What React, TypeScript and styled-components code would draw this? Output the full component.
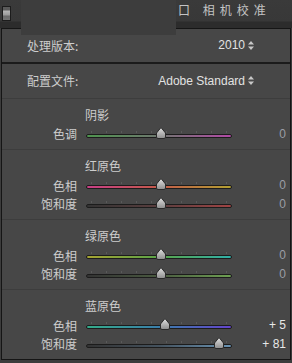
import React from 'react';
import styled, { createGlobalStyle } from 'styled-components';

const GlobalStyle = createGlobalStyle`
  html, body {
    margin: 0;
    padding: 0;
    background: #3c3c3c;
  }
  body {
    width: 292px;
    height: 363px;
    overflow: hidden;
    font-family: "Noto Sans CJK SC", "Liberation Sans", sans-serif;
  }
`;

const Page = styled.div`
  position: relative;
  width: 292px;
  height: 363px;
  display: flex;
  flex-direction: column;
`;

const TitleBar = styled.div`
  height: 28px;
  box-sizing: border-box;
  display: flex;
  align-items: flex-start;
  background: linear-gradient(#3a3a3a 0, #383838 21px, #2c2c2c 22px, #2c2c2c 28px);
  overflow: hidden;
`;

const GripIcon = styled.div`
  margin: 6px 0 0 2px;
  width: 9px;
  height: 15px;
  box-sizing: border-box;
  border: 1px solid #1c1c1c;
  background: linear-gradient(#5a5a5a 0, #5a5a5a 3px, #b4b4b4 4px, #9a9a9a 8px, #6a6a6a 9px, #747474 100%);
`;

const TitleText = styled.div`
  margin: 3px 0 0 167px;
  font-size: 12px;
  line-height: 14px;
  letter-spacing: 5px;
  color: #c4c4c4;
  white-space: nowrap;
`;

const Redaction = styled.div`
  position: absolute;
  left: 21px;
  top: 0;
  width: 155px;
  height: 35px;
  background: #3d3d3d;
`;

const Panel = styled.div`
  margin: 0 1px;
  border: 1px solid #151515;
  background: #474747;
  display: flex;
  flex-direction: column;
  height: 332px;
  box-sizing: border-box;
`;

const TopRow = styled.div<{ $h: number; $strong?: boolean }>`
  height: ${p => p.$h}px;
  display: flex;
  align-items: center;
  justify-content: space-between;
  padding: 0 36px 0 25px;
  border-bottom: ${p => (p.$strong ? '2px solid #1b1b1b' : '1px solid #3d3d3d')};
`;

const Label = styled.span`
  font-size: 12px;
  color: #cdcdcd;
`;

const Picker = styled.span`
  display: flex;
  align-items: center;
  gap: 3px;
  font-family: "Liberation Sans", sans-serif;
  font-size: 12px;
  color: #e2e2e2;
`;

const Section = styled.div<{ $last?: boolean }>`
  padding: 6px 0 6px;
  border-bottom: ${p => (p.$last ? 'none' : '1px solid #3d3d3d')};
  display: flex;
  flex-direction: column;
`;

const SectionTitle = styled.div`
  height: 20px;
  line-height: 20px;
  padding-left: 83px;
  font-size: 12px;
  color: #cdcdcd;
`;

const SliderRow = styled.div`
  display: grid;
  grid-template-columns: 75px 146px 45px;
  column-gap: 9px;
  align-items: center;
  height: 18.5px;
`;

const RowLabel = styled.span`
  text-align: right;
  font-size: 12px;
  color: #cdcdcd;
`;

const SliderBox = styled.div`
  position: relative;
  display: flex;
  flex-direction: column;
  padding-top: 1px;
`;

const Ticks = styled.div`
  height: 2px;
  margin: 0 4px 1px 5px;
  background: repeating-linear-gradient(90deg, #5a5a5a 0, #5a5a5a 1px, transparent 1px, transparent 15px);
`;

const Track = styled.div<{ $from: string; $mid: string; $to: string }>`
  height: 4px;
  box-sizing: border-box;
  border: 1px solid #1c1c1c;
  border-radius: 2px;
  background: linear-gradient(90deg, ${p => p.$from}, ${p => p.$mid}, ${p => p.$to});
`;

const Thumb = styled.svg`
  position: absolute;
  top: -3px;
  margin-left: -5px;
`;

const Value = styled.span<{ $bright?: boolean }>`
  text-align: right;
  font-family: "Liberation Sans", sans-serif;
  font-size: 12px;
  color: ${p => (p.$bright ? '#e8e8e8' : '#9b9ea6')};
`;

const Arrows = () => (
  <svg width="6" height="9" viewBox="0 0 6 9">
    <path d="M3 0 L6 3.5 L0 3.5 Z M0 5.5 L6 5.5 L3 9 Z" fill="#c8c8c8" />
  </svg>
);

type SliderProps = {
  label: string;
  value: number;
  from: string;
  mid: string;
  to: string;
};

const Slider = ({ label, value, from, mid, to }: SliderProps) => {
  const pos = 75 + (value / 100) * 71;
  return (
    <SliderRow>
      <RowLabel>{label}</RowLabel>
      <SliderBox>
        <Ticks />
        <Track $from={from} $mid={mid} $to={to} />
        <Thumb width="10" height="12" viewBox="0 0 10 12" style={{ left: pos }}>
          <defs>
            <linearGradient id="thumbFill" x1="0" y1="0" x2="0" y2="1">
              <stop offset="0" stopColor="#e2e2e2" />
              <stop offset="1" stopColor="#8c8c8c" />
            </linearGradient>
          </defs>
          <path
            d="M5 0.5 L9.5 6 L9.5 10 Q9.5 11.5 8 11.5 L2 11.5 Q0.5 11.5 0.5 10 L0.5 6 Z"
            fill="url(#thumbFill)"
            stroke="#2a2a2a"
          />
        </Thumb>
      </SliderBox>
      <Value $bright={value !== 0}>{value > 0 ? `+ ${value}` : value}</Value>
    </SliderRow>
  );
};

const sections = [
  {
    title: '阴影',
    sliders: [{ label: '色调', value: 0, from: '#4f944f', mid: '#6f776f', to: '#b24aa6' }],
  },
  {
    title: '红原色',
    sliders: [
      { label: '色相', value: 0, from: '#c83f86', mid: '#c45a4a', to: '#b2a032' },
      { label: '饱和度', value: 0, from: '#333333', mid: '#5a3e3e', to: '#a04444' },
    ],
  },
  {
    title: '绿原色',
    sliders: [
      { label: '色相', value: 0, from: '#a6a432', mid: '#5aa448', to: '#30b0a8' },
      { label: '饱和度', value: 0, from: '#333333', mid: '#4a5a40', to: '#6ea052' },
    ],
  },
  {
    title: '蓝原色',
    sliders: [
      { label: '色相', value: 5, from: '#34ac8a', mid: '#3a7eaa', to: '#6444cc' },
      { label: '饱和度', value: 81, from: '#333333', mid: '#44525e', to: '#6a94b4' },
    ],
  },
];

export default function App() {
  return (
    <Page>
      <GlobalStyle />
      <TitleBar>
        <GripIcon />
        <TitleText>口 相机校准</TitleText>
      </TitleBar>
      <Redaction />
      <Panel>
        <TopRow $h={34} $strong>
          <Label>处理版本:</Label>
          <Picker>
            2010 <Arrows />
          </Picker>
        </TopRow>
        <TopRow $h={35}>
          <Label>配置文件:</Label>
          <Picker>
            Adobe Standard <Arrows />
          </Picker>
        </TopRow>
        {sections.map((s, i) => (
          <Section key={s.title} $last={i === sections.length - 1}>
            <SectionTitle>{s.title}</SectionTitle>
            {s.sliders.map(sl => (
              <Slider key={sl.label} {...sl} />
            ))}
          </Section>
        ))}
      </Panel>
    </Page>
  );
}
